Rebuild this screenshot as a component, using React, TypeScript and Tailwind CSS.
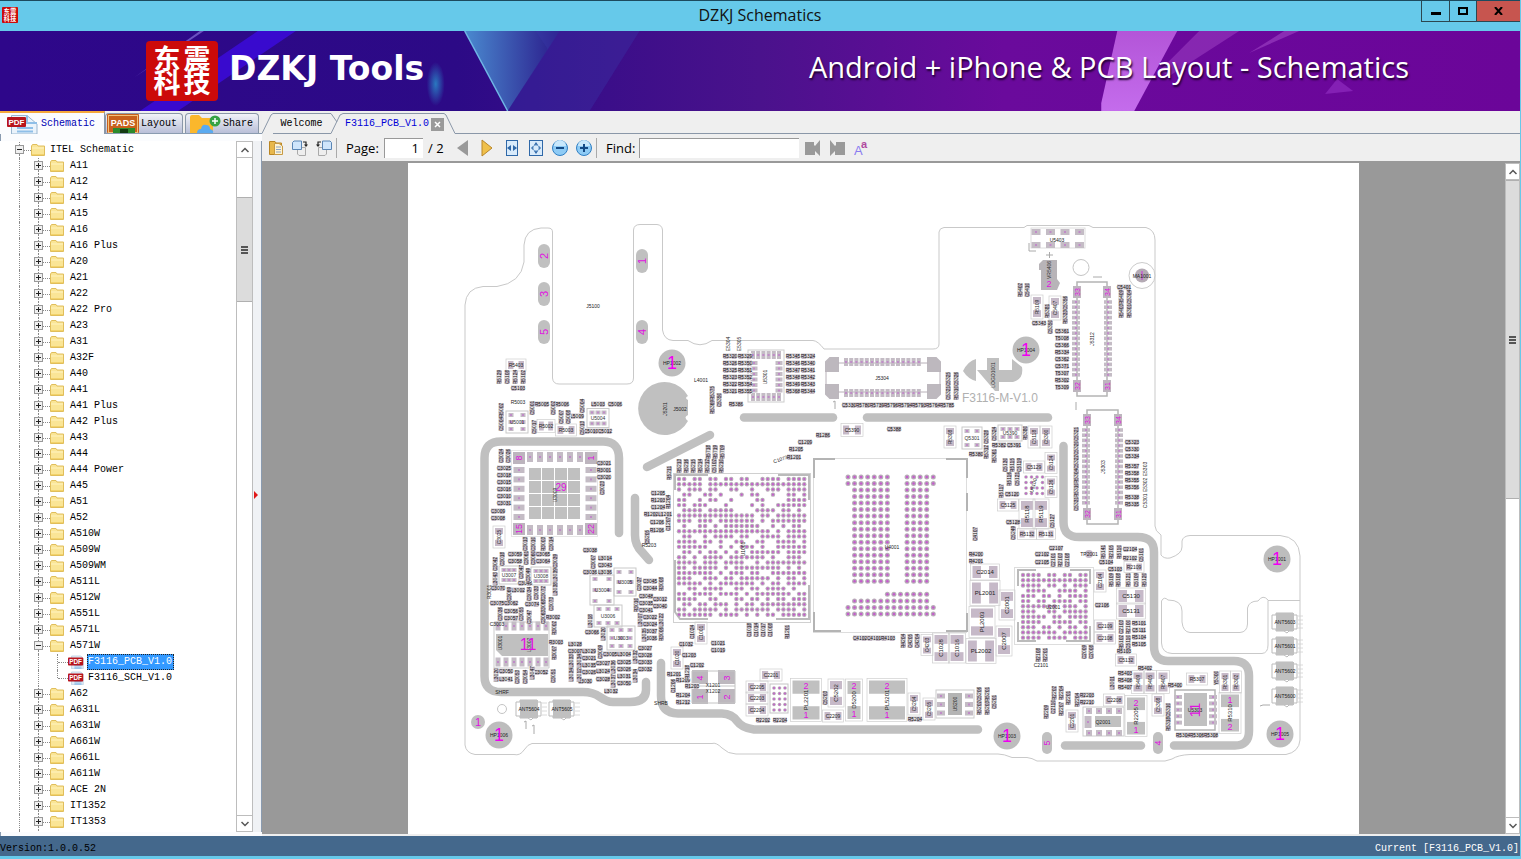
import { type ReactNode } from "react";

type Run = [x: number, y: number, dx: number, dy: number, names: string];
type Part = [x: number, y: number, w: number, h: number, name: string, axis: "h" | "v", pins?: string];

const MODELS_BEFORE = [
  "A11", "A12", "A14", "A15", "A16", "A16 Plus", "A20", "A21", "A22", "A22 Pro", "A23", "A31", "A32F", "A40",
  "A41", "A41 Plus", "A42 Plus", "A43", "A44", "A44 Power", "A45", "A51", "A52", "A510W", "A509W", "A509WM",
  "A511L", "A512W", "A551L", "A571L",
];
const MODELS_AFTER = ["A62", "A631L", "A631W", "A661W", "A661L", "A611W", "ACE 2N", "IT1352", "IT1353"];

/* ---------- board data, in page units ---------- */

const OUTLINE = [
  "M465 745V305Q466 288 483 286.500H497Q521 283 524 262V245Q525 229 541 228H548Q552.500 228 552.500 232V378Q553 384 559 384H627Q633.500 384 633.500 378V230Q634 224.500 640 224.500H657Q662 225 662.500 230V330Q664 340 673 340.500H688Q700 349 712 340.500H813Q818 341 824 349H933Q939 349 939 344V232Q939.500 228 944 227.500H1024L1027 225.500H1089L1093 227.500H1146Q1155 230 1155 240V526Q1155 531 1161 535V555Q1164 559 1170 558Q1182 554 1182 547V541Q1183 536 1190 535.500H1280Q1299 537 1300 556V740Q1299 752 1286 754.500H1190Q1178 755 1172 759L1165 761H1037Q1032 758 1027 757.500H1012Q1004 754 998 754H736Q728 754 722 748T712 743.500H532Q528 744 524 750T514 754.500H475Q466 753 465 745Z",
  "M1300 600.500H1268V645Q1268 653 1262 653.500H1172Q1162 653 1161.500 643V601Q1164 596 1168 600Q1182 600 1182 611V622Q1183 632 1190 632.500H1240Q1247 632 1247.500 624V608Q1249 601 1258 601Q1263 594 1268 600",
];

const TRACES = [
  "M619 533V458Q619 441.500 603 441.500H501Q484.500 441.500 484.500 458V676Q484.500 692 501 692H583Q593 692 600 697T613 702H630Q646 702 646 690V682",
  "M647 467L710 435",
  "M635 498V535Q635 545 642 552L649 560",
  "M744 417.500H833",
  "M867 417.500H1048",
  "M661 663V696Q661 713 678 713.500H722Q732 714 737 721T754 729.500H978",
  "M1063.500 446V522Q1063.500 537 1079 537H1138Q1154 537 1154 552V646Q1154 661 1168 661H1234Q1249 661 1249 676V731Q1249 745.500 1235 745.500H1174",
  "M1065 745.500H1141",
];

const ROW_LABELS: Run[] = [
  [518, 388, 0, 7, "C5103"],
  [542, 404, 20, 0, "R5005 R5006"],
  [598, 404, 17, 0, "L5003 C5006"],
  [577, 416, 0, 7, "L5009"],
  [591, 431, 14, 0, "C5010 C5012"],
  [730, 356, 0, 7, "R5320 R5326 R5325 R5323 R5322 R5321"],
  [745, 356, 0, 7, "R5329 R5350 R5351 R5352 R5354 R5355"],
  [793, 356, 0, 7, "R5345 R5346 R5347 R5348 R5349 R5368"],
  [808, 356, 0, 7, "R5324 R5340 R5341 R5342 R5343 R5344"],
  [736, 404, 0, 7, "R5386"],
  [849, 405, 14, 0, "C5330 R5780 R5739 R5796 R5794 R5793 R5764 R5785"],
  [894, 429, 0, 7, "C5388"],
  [823, 435, 0, 7, "R1286"],
  [805, 442, 0, 7, "C1209"],
  [796, 449, 0, 7, "R1205"],
  [794, 457, 0, 7, "R1201"],
  [1039, 323, 0, 7, "C5343"],
  [1062, 331, 0, 7, "C5361 T5008 C5366 R5334 C5362 C5371 T5307 R5302 T5309"],
  [1124, 287, 0, 7, "C5401"],
  [1132, 442, 0, 7, "C5323 C5330 C5334"],
  [1132, 466, 0, 7, "R5357 R5358 R5355 R5356"],
  [1132, 497, 0, 7, "R5338 R5335"],
  [976, 454, 0, 7, "R5380"],
  [999, 445, 15, 0, "R5382 C5391"],
  [1012, 494, 0, 7, "C5120"],
  [1013, 522, 0, 7, "C5128"],
  [1042, 554, 0, 8, "C2102 C2105"],
  [1056, 548, 0, 7, "C2107"],
  [1130, 549, 0, 9, "C2104 R2102"],
  [1106, 562, 9, 7, "C5104 C5103"],
  [1102, 605, 0, 7, "C2106"],
  [1139, 623, 0, 7, "R5101 C5111 R5104 R5105"],
  [1124, 651, 0, 7, "R5103"],
  [1145, 668, 0, 7, "R5402"],
  [1125, 673, 0, 7, "R5403 R5408 R5407"],
  [1175, 685, 0, 7, "R5400"],
  [1087, 695, 0, 7, "R2203 R2210"],
  [1183, 735, 14, 0, "R5304 R5306 R5308"],
  [860, 638, 14, 0, "C4102 C4101 R4103"],
  [976, 554, 0, 7, "R4200 R4201"],
  [763, 720, 17, 0, "R2202 R2204"],
  [915, 719, 0, 7, "R5204"],
  [504, 468, 0, 7, "C3025 C3018 C3015 C3016 C3010 C3031"],
  [498, 511, 0, 7, "C3009 C3008"],
  [604, 463, 0, 7, "C3021 R3001 C3020"],
  [515, 554, 0, 7, "C3059 C3058"],
  [543, 554, 0, 7, "C3065 C3064"],
  [498, 588, 0, 7, "C3070"],
  [525, 583, 0, 7, "C3046"],
  [518, 590, 0, 7, "L3002"],
  [497, 603, 14, 0, "C3075 C3062"],
  [532, 604, 0, 7, "C3074"],
  [511, 611, 0, 7, "C3056 C3057"],
  [553, 617, 0, 7, "R3002"],
  [556, 642, 0, 7, "R3003"],
  [506, 671, 0, 8, "C3050 L3041"],
  [541, 672, 0, 7, "C3052"],
  [590, 550, 0, 7, "C3038"],
  [605, 558, 0, 7, "L3014 C3043 L3036"],
  [590, 572, 0, 7, "C3036"],
  [650, 581, 0, 7, "C3045 C3044"],
  [646, 596, 0, 7, "C3048 C3035 C3041"],
  [660, 599, 0, 7, "C3012 C3040"],
  [650, 617, 0, 7, "C3022 C3024 C3037 C3036"],
  [592, 632, 0, 7, "C3066"],
  [575, 644, 0, 7, "L3028 C3007"],
  [589, 651, 0, 7, "L3029 C3021 L3035 C3026"],
  [585, 681, 0, 7, "C3030"],
  [610, 654, 14, 0, "C3005 L3004"],
  [603, 663, 0, 8, "C3027 L3024 C3028"],
  [624, 662, 0, 7, "C3025 C3026 L3031 C3050"],
  [611, 691, 0, 7, "L3032"],
  [645, 648, 0, 7, "C3027 C3028 C3033 C3032"],
  [658, 493, 0, 7, "C1205 R1203 C1204"],
  [651, 514, 14, 0, "R1202 L1201"],
  [657, 522, 0, 8, "C1206 R1206"],
  [686, 644, 3, 11, "C1032 C1203"],
  [718, 643, 0, 7, "C1021 C1019"],
  [697, 665, 0, 7, "C1202"],
  [674, 674, 9, 6, "R1201 R1209 R1203"],
  [683, 695, 0, 7, "R1204 R1212"],
];

const COLUMN_LABELS: Run[] = [
  [499, 377, 8, 0, "R5129 C5108 R5124 R5102"],
  [501, 410, 0, 14, "R5002 C5004"],
  [532, 408, 21, 0, "C5001 C5002"],
  [582, 406, 0, 22, "C5004 C5013"],
  [561, 417, 7, 0, "C5007 C5008"],
  [534, 427, 0, 7, "C5017"],
  [712, 393, 0, 14, "R5375 R5369"],
  [719, 400, 0, 13, "C5350"],
  [679, 466, 7, 0, "R5213 R5216 R5215 R5214 R5212 C5102 R5210"],
  [708, 452, 7, 0, "R5718 R5719 R5709"],
  [669, 473, 7, 0, "R5211"],
  [948, 379, 8, 0, "C5325 C5326"],
  [948, 393, 8, 0, "C5321 R5310"],
  [1020, 290, 7, 0, "R5402 C5410"],
  [1047, 311, 3, 16, "R5381 C5350"],
  [1065, 303, 0, 14, "C5356 R5333"],
  [1121, 297, 8, 0, "R5409 C5304"],
  [1121, 311, 8, 0, "R5403 R5301"],
  [1076, 434, 0, 14, "C5321 C5320 C5322 R5304 R5310 C5331"],
  [986, 437, 0, 15, "C5328 R5312"],
  [994, 434, 0, 22, "C5324 R5361"],
  [1025, 433, 0, 7, "R5380"],
  [1005, 465, 7, 0, "C5130 R5115 C5119"],
  [1009, 479, 8, 0, "R5116 C5121"],
  [1001, 491, 7, 0, "R5117"],
  [1013, 533, 7, 0, "C5249"],
  [1052, 521, 7, 0, "C5127"],
  [1053, 560, 7, 0, "C2101 R2103 C2108"],
  [1103, 552, 8, 0, "R5141 R2105 R5110"],
  [1141, 555, 0, 7, "C5101"],
  [1111, 580, 7, 0, "R5109 R5108"],
  [1128, 580, 8, 0, "R5121 C5109 R5120"],
  [1121, 627, 7, 0, "C2103 R2100"],
  [1121, 642, 7, 0, "R5102 C5110"],
  [1038, 655, 7, 0, "R2108 R2201"],
  [1084, 652, 7, 0, "C2009 C2008"],
  [1112, 683, 0, 7, "L3001"],
  [1216, 678, 0, 7, "Y5300"],
  [1046, 712, 7, -5, "R2209 C2110"],
  [1054, 693, 7, 0, "R2202 R2204"],
  [1061, 709, 7, -11, "R2207 R2201"],
  [1077, 700, 0, 7, "R2204"],
  [1168, 710, 0, 14, "C5310 R5318"],
  [749, 630, 7, 0, "C1018 C1014 C1017 C1008"],
  [787, 632, 7, 0, "R1201"],
  [903, 641, 7, 0, "R4204 C4205 C4204"],
  [975, 534, 7, 0, "C4107"],
  [825, 698, 7, 0, "C5203"],
  [979, 694, 8, 0, "C5206 R5201"],
  [979, 708, 8, 0, "R5202 R5203"],
  [994, 702, 8, 0, "C5201"],
  [501, 456, 7, 0, "C3024 C3026"],
  [602, 488, 7, 0, "C3023"],
  [525, 544, 8, 0, "C3013 C3010"],
  [543, 544, 8, 0, "R3003 C3014"],
  [526, 558, 7, 0, "C3061 C3060"],
  [502, 559, 0, 7, "C3018"],
  [495, 564, 0, 15, "C3042 L3043"],
  [521, 572, 7, 3, "C3047 C3049"],
  [555, 561, 0, 14, "C3039 L3039 L3038"],
  [509, 594, 20, 0, "C3069 C3034"],
  [536, 593, 7, 0, "C3033 C3072"],
  [543, 606, 8, -2, "R3068 C3073"],
  [500, 614, 21, 0, "C3036 C3055"],
  [529, 617, 14, 0, "C3047 C3063"],
  [554, 628, 0, 25, "R3002 R3007"],
  [496, 675, 0, 7, "L3020"],
  [517, 677, 8, 0, "C3053 C3054"],
  [532, 673, 21, 3, "L3047 C3051"],
  [593, 562, 0, 7, "C3007"],
  [639, 584, 22, 0, "C3037 R3008"],
  [636, 605, 4, 15, "R3010 L3007 L3035"],
  [661, 620, 0, 14, "L3022 R3006"],
  [590, 621, 13, 13, "L3018 L3020"],
  [571, 661, 8, 0, "L3033 L3034"],
  [571, 675, 8, 0, "L3034 L3012"],
  [600, 652, 0, 7, "C3009"],
  [613, 667, 0, 14, "L3036 L3037"],
  [635, 657, 0, 19, "L3032 L3034"],
  [668, 502, 0, 22, "R1204 C1207"],
  [647, 537, 7, 0, "C5205"],
  [692, 632, 7, 0, "C1024"],
  [673, 686, 14, -14, "C1206 R1218"],
];

/* silk text without a pad under it: x, y, text, rotation */
const SILK: [number, number, string, number][] = [
  [593, 308, "J5100", 0], [518, 404, "R5003", 0], [701, 382, "L4001", 0], [730, 344, "E5304", -90],
  [741, 344, "E5305", -90], [767, 377, "U5301", -90], [882, 380, "J5304", 0], [781, 461, "C1073", -20],
  [1094, 339, "J5312", -90], [1105, 467, "J5303", -90], [1147, 485, "C5301 E5302 E5303", -90],
  [667, 409, "J5201", -90], [680, 411, "J5002", 0], [745, 549, "U1001", -90], [892, 549, "U4001", 0],
  [1053, 609, "U2001", 0], [1057, 242, "U5403", 0], [649, 547, "R5203", 0], [491, 592, "R3001", -90],
  [497, 626, "C3003", 0], [1041, 667, "C2101", 0], [502, 694, "SHRF", 0], [661, 705, "SHRB", 0],
  [1089, 556, "TP2001", 0], [502, 643, "U3001", -90], [1035, 486, "U5100", -75],
];

const PARTS: Part[] = [
  [516, 365, 16, 8, "R5403", "h"], [546, 426, 14, 9, "R5002", "h"], [566, 430, 17, 8, "R5003", "h"],
  [852, 430, 18, 9, "C5390", "h"], [950, 437, 8, 18, "R5308", "v"], [1037, 307, 8, 20, "R5109", "v"],
  [1055, 308, 8, 20, "C5407", "v"], [1034, 437, 8, 18, "C5118", "v"], [1046, 437, 8, 18, "C5300", "v"],
  [1051, 463, 8, 17, "C5124", "v"], [1051, 487, 8, 17, "C5126", "v"], [1034, 467, 17, 8, "C5129", "h"],
  [1008, 505, 17, 8, "C5125", "h"], [1027, 514, 12, 26, "R5118", "v"], [1041, 514, 12, 26, "R5119", "v"],
  [1027, 534, 15, 7, "R5132", "h"], [1046, 534, 15, 7, "R5131", "h"], [1134, 567, 16, 7, "R2109", "h"],
  [1100, 581, 8, 18, "C2104", "v"], [1131, 596, 25, 12, "C5130", "h"], [1131, 611, 25, 12, "C5131", "h"],
  [1105, 626, 17, 8, "C2109", "h"], [1105, 638, 17, 8, "C2108", "h"], [1126, 660, 17, 8, "C5132", "h"],
  [1138, 682, 9, 19, "R5409", "v"], [1150, 682, 9, 19, "R5405", "v"], [1163, 682, 9, 19, "R5407", "v"],
  [1197, 679, 17, 8, "R5307", "h"], [1225, 682, 7, 18, "R5301", "v"], [1236, 682, 7, 18, "R5302", "v"],
  [1114, 700, 17, 8, "C2208", "h"], [1072, 721, 8, 18, "C2201", "v"], [1158, 705, 8, 18, "C5308", "v"],
  [1136, 716, 18, 37, "R2205", "v", "21"], [1230, 713, 18, 37, "R5310", "v", "12"],
  [927, 645, 8, 17, "C4203", "v"], [941, 648, 13, 26, "C1028", "v"], [957, 648, 13, 26, "C1016", "v"],
  [985, 572, 25, 12, "C2014", "h"], [985, 593, 26, 21, "PL2001", "h"], [1007, 605, 12, 26, "C2001", "v"],
  [982, 622, 22, 27, "PL2003", "v"], [981, 651, 26, 21, "PL2002", "h"], [1004, 641, 12, 26, "C2007", "v"],
  [771, 675, 18, 8, "C2201", "h"], [757, 687, 18, 8, "C2205", "h"], [757, 698, 18, 8, "C2203", "h"],
  [757, 710, 18, 8, "C2204", "h"], [806, 700, 27, 39, "PL2201", "v", "21"], [836, 693, 12, 24, "C5202", "v"],
  [833, 716, 17, 8, "C2209", "h"], [854, 700, 13, 38, "D5200", "v", "21"], [887, 700, 36, 39, "PL5201", "v", "21"],
  [914, 704, 8, 18, "C5204", "v"], [929, 709, 8, 18, "C5205", "v"], [499, 537, 8, 18, "C3025", "v"],
  [701, 633, 8, 18, "C1001", "v"], [677, 658, 8, 18, "C1020", "v"],
];

/* x, y, width, height, pad columns, pad rows, name */
const ARRAYS: [number, number, number, number, number, number, string][] = [
  [517, 422, 18, 18, 2, 3, "U5001"], [598, 418, 18, 15, 3, 2, "U5004"], [509, 575, 16, 14, 3, 2, "U3007"],
  [541, 576, 16, 14, 3, 2, "U3008"], [602, 590, 20, 26, 2, 3, "U3004"], [625, 582, 18, 24, 2, 3, "U3005"],
  [608, 616, 24, 18, 3, 2, "U3006"], [621, 638, 24, 20, 3, 3, "U3003"], [972, 438, 16, 18, 2, 2, "Q5301"],
  [1010, 433, 20, 12, 3, 2, "U5390"],
];

const CPU_BALLS = [
  "11011011011011001111011110", "1111101111111111111111111", "1011101100110010011101111", "0110011010001011001001101",
  "1100101100100001100001111", "1101110001000010100111111", "0111101111100001111011010", "1111111111111110110111111",
  "1110111011111110101111111", "0100110101111111001010110", "1111111111111111110101111", "0110010111101100111101111",
  "1111011010011001100111101", "1111110010101110100111111", "0110101101010011111101111", "1101011110111111101001110",
  "1111011101111001011111111", "1101111101011111111101010", "1111111010111011001111111", "1110011101101111110101101",
  "1111101011111110101101111", "0011011110011011011110100", "1101111011110101111111011", "1111001100011011010110111",
  "0110110111010110111111111", "1101111101011111110111101", "1111111011110101011011111",
].map((row) => row.slice(0, 25));

const RF_BALLS = [
  "1111011011011", "1111111111111", "1111011010111", "0111100111101", "1110110101111", "1101101111011",
  "1111111011101", "1110011011111", "1111101101111", "1111001111011", "1110110101101", "1111111011111", "1111011110111",
];

const MEMORY_BALLS = [
  "11111110011111", "11111110011111",
  ...Array<string>(15).fill("01111110011110"),
  "00000000000000", "00000011111110", "01111111111110", "11111111111111", "11111111111111",
];

const MOUNTS: [number, number, string][] = [
  [672, 363, "HP1002"], [1026, 350, "HP1004"], [1277, 559, "HP1001"],
  [1280, 734, "HP1005"], [1007, 736, "HP1003"], [499, 735, "HP1006"],
];

const range = (n: number) => Array.from({ length: n }, (_, i) => i);

/* ---------- board drawing ---------- */

function Tags({ runs, vertical }: { runs: Run[]; vertical?: boolean }) {
  return (
    <g fontSize="5" textAnchor="middle">
      {runs.flatMap(([x, y, dx, dy, names], r) =>
        names.split(" ").map((name, i) => (
          <g key={`${r}-${i}`} transform={`translate(${x + dx * i} ${y + dy * i})${vertical ? " rotate(-90)" : ""}`}>
            <rect x="-7" y="-3" width="14" height="6" fill="#e6e3e6" />
            <rect x="-6" y="-2" width="4" height="5" fill="#c3b9c5" />
            <rect x="2" y="-2" width="4" height="5" fill="#c3b9c5" />
            <text y="2" fill="#111">{name}</text>
          </g>
        )),
      )}
    </g>
  );
}

function TwoPad({ part: [x, y, w, h, name, axis, pins] }: { part: Part }) {
  const across = axis === "h";
  const pw = across ? w * 0.34 : w;
  const ph = across ? h : h * 0.34;
  const [a, b] = pins ?? "";
  return (
    <g transform={`translate(${x} ${y})`} textAnchor="middle">
      <rect x={-w / 2 - 2} y={-h / 2 - 2} width={w + 4} height={h + 4} fill="none" stroke="#cfcfcf" strokeWidth=".7" />
      <rect x={-w / 2} y={-h / 2} width={pw} height={ph} fill={pins ? "#c0c0c0" : "#c6b9c8"} />
      <rect x={w / 2 - pw} y={h / 2 - ph} width={pw} height={ph} fill={pins ? "#c0c0c0" : "#c6b9c8"} />
      <text fontSize={w + h > 34 ? 6 : 5} y="2" fill="#222" transform={across ? undefined : "rotate(-90)"}>{name}</text>
      {pins && (
        <g fontSize="9" fill="#e010e0">
          <text y={-h / 2 + 8}>{a}</text>
          <text y={h / 2 - 2}>{b}</text>
        </g>
      )}
    </g>
  );
}

function Balls({ x, y, pitch, pitchY = pitch, rows, r = 2.2 }: { x: number; y: number; pitch: number; pitchY?: number; rows: string[]; r?: number }) {
  return (
    <g>
      {rows.flatMap((row, j) =>
        [...row].map((on, i) =>
          on === "1" ? (
            <g key={`${i}-${j}`}>
              <circle cx={x + i * pitch} cy={y + j * pitchY} r={r} fill="#b8acb8" />
              <circle cx={x + i * pitch} cy={y + j * pitchY} r={r * 0.5} fill="#c45ccc" />
            </g>
          ) : null,
        ),
      )}
    </g>
  );
}

function Pads({ x, y, dx = 0, dy = 0, n, w, h }: { x: number; y: number; dx?: number; dy?: number; n: number; w: number; h: number }) {
  return (
    <g>
      {range(n).map((i) => (
        <g key={i}>
          <rect x={x + dx * i - w / 2} y={y + dy * i - h / 2} width={w} height={h} fill="#c4bcc5" />
          <rect x={x + dx * i - 1} y={y + dy * i - 1} width="2" height="2" fill="#c08bc8" />
        </g>
      ))}
    </g>
  );
}

function Pin({ x, y, label, size = 11, turn = -90 }: { x: number; y: number; label: string; size?: number; turn?: number }) {
  return (
    <text transform={`translate(${x} ${y}) rotate(${turn})`} y={size * 0.36} fontSize={size} fill="#e010e0" textAnchor="middle">
      {label}
    </text>
  );
}

function SideConnector({ x, y, width }: { x: number; y: number; width: number }) {
  const right = x + width;
  return (
    <g>
      <rect x={x} y={y} width={width} height="114" fill="none" stroke="#b4b4b4" strokeWidth="1.5" />
      <Pads x={x - 1} y={y + 20} dy={5.2} n={15} w={8} h={3.6} />
      <Pads x={right + 1} y={y + 20} dy={5.2} n={15} w={8} h={3.6} />
      {[[x, 10, "33"], [right, 10, "34"], [x, 104, "32"], [right, 104, "31"]].map(([px, py, label]) => (
        <g key={label}>
          <rect x={Number(px) - 4} y={y + Number(py) - 6} width="8" height="12" fill="#bdb5be" />
          <Pin x={Number(px)} y={y + Number(py)} label={String(label)} size={7} />
        </g>
      ))}
    </g>
  );
}

function Antenna({ x, y, name }: { x: number; y: number; name: string }) {
  return (
    <g transform={`translate(${x} ${y})`}>
      <path d="M-13-7H-9V-9H8V-7H12V7H8V9H4L2 11L-1 9H-9V7H-13Z" fill="none" stroke="#bbb" />
      <path d="M-9-9H9V9H-9Z" fill="#c0c0c0" />
      <path d="M13-6h5M13-2h5M13 2h5M13 6h5" stroke="#d0d0d0" strokeWidth=".8" />
      <text y="2" fontSize="5" fill="#222" textAnchor="middle">{name}</text>
    </g>
  );
}

function Board() {
  return (
    <svg
      viewBox="408 163 951 671"
      className="h-[671px] w-[951px] shrink-0 bg-white"
      fontFamily="'Liberation Sans', sans-serif"
      role="img"
      aria-label="F3116 PCB V1.0 component placement"
    >
      <g fill="none" stroke="#c9c9c9">{OUTLINE.map((d) => <path key={d} d={d} />)}</g>
      <g fill="none" stroke="#c0c0c0" strokeWidth="8.500" strokeLinecap="round">
        {TRACES.map((d) => <path key={d} d={d} />)}
      </g>

      {/* edge contacts */}
      {([[544, 256, "2"], [544, 294, "3"], [544, 332, "5"], [642, 261, "1"], [642, 332, "4"]] as const).map(([x, y, n]) => (
        <g key={n}>
          <rect x={x - 6} y={y - 12} width="12" height="24" rx="6" fill="#c0c0c0" />
          <Pin x={x} y={y} label={n} />
        </g>
      ))}
      {([[1047, 743, "5"], [1158, 743, "4"]] as const).map(([x, y, n]) => (
        <g key={n}>
          <rect x={x - 5} y={y - 11} width="10" height="22" rx="5" fill="#c0c0c0" />
          <Pin x={x} y={y} label={n} size={9} />
        </g>
      ))}

      {MOUNTS.map(([x, y, name]) => (
        <g key={name} textAnchor="middle">
          <circle cx={x} cy={y} r="13.500" fill="#bdbdbd" />
          <text x={x} y={y + 2} fontSize="5" fill="#222">{name}</text>
          <text x={x} y={y + 6} fontSize="18" fill="#f000f0">1</text>
        </g>
      ))}
      <circle cx="478" cy="722" r="7" fill="#c0c0c0" />
      <Pin x={478} y={722} label="1" turn={0} />
      <circle cx="1142" cy="275.500" r="13" fill="none" stroke="#ccc" />
      <circle cx="1142" cy="275.500" r="7" fill="#b4aab4" />
      <path d="M1142 271V280" stroke="#c45ccc" strokeWidth="1.500" />
      <text x="1142" y="278" fontSize="5" fill="#222" textAnchor="middle">MA1001</text>
      <circle cx="1089" cy="554" r="4" fill="#c6b9c8" />
      <g fill="none" stroke="#c4c4c4">
        <circle cx="1081" cy="267.500" r="8" />
        <circle cx="502" cy="709" r="4.500" />
      </g>
      <path d="M688 396A26.500 26.500 0 1 0 688 421Q683 417 688 415V400Q684 398 688 396Z" fill="#c0c0c0" />

      {/* logo arrow and board name */}
      <path d="M963 371Q968 361 976 359V381Q968 379 963 371ZM977 370H987V358H999V370H1012V359L1022 367Q1024 379 1013 382H999V391H995Z" fill="#c0c0c0" />
      <text transform="translate(993 375) rotate(-90)" y="2" fontSize="5" fill="#333" textAnchor="middle">LOGO1001</text>
      <text x="962" y="402" fontSize="12" fill="#b0b0b0">F3116-M-V1.0</text>

      {/* board-to-board connectors */}
      <path d="M830 358H838V371H826V362ZM928 358H936L940 362V371H928ZM826 385H838V398H830L826 394ZM928 385H940V394L936 398H928Z" fill="#bdb8be" stroke="#bdb8be" strokeWidth="2" />
      <path d="M826 371V385M940 371V385M838 363H928M838 392H928" stroke="#b8b0b8" />
      <Pads x={846} y={362} dx={5.2} n={15} w={4} h={8} />
      <Pads x={846} y={393} dx={5.2} n={15} w={4} h={8} />
      <SideConnector x={1077} y={282} width={30} />
      <SideConnector x={1087} y={410} width={31} />

      <rect x="748" y="350" width="36" height="52" fill="none" stroke="#ccc" />
      <Pads x={753} y={355} dx={5.2} n={6} w={4} h={8} />
      <Pads x={753} y={397} dx={5.2} n={6} w={4} h={8} />
      <Pads x={754} y={363} dy={5.5} n={6} w={7} h={4} />
      <Pads x={779} y={363} dy={5.5} n={6} w={7} h={4} />

      <rect x="1031" y="228" width="54" height="20" fill="none" stroke="#ddd" />
      <Pads x={1036} y={232} dx={14.5} n={4} w={9} h={6} />
      <Pads x={1036} y={245} dx={14.5} n={4} w={9} h={6} />
      <path d="M1029 243V251H1036M1049.500 252V258M1046 255H1053M1093 277H1102M1076 402V410" fill="none" stroke="#aaa" />
      <path d="M1043 260H1057V279L1060 283L1057 290H1041V270H1039V264Z" fill="#b8b4b8" />
      <Pin x={1049} y={284} label="2" size={9} turn={0} />
      <text transform="translate(1049 270) rotate(-90)" y="2" fontSize="5" fill="#333" textAnchor="middle">VR5406</text>

      {/* power amplifier */}
      <rect x="511.500" y="450.500" width="86" height="86" fill="none" stroke="#ccc" strokeDasharray="1 1" />
      <Pads x={530} y={457} dx={10} n={6} w={6} h={10} />
      <Pads x={530} y={530} dx={10} n={6} w={6} h={10} />
      <Pads x={519} y={470} dy={9.4} n={6} w={11} h={6} />
      <Pads x={591} y={470} dy={9.4} n={6} w={11} h={6} />
      {([[519, 458, "8"], [591, 458, "1"], [519, 529, "15"], [591, 529, "22"]] as const).map(([x, y, n]) => (
        <g key={n}>
          <rect x={x - 6} y={y - 6} width="12" height="12" fill="#bdb5be" />
          <Pin x={x} y={y} label={n} size={9} />
        </g>
      ))}
      {range(16).map((i) => (
        <rect key={i} x={529 + (i % 4) * 13} y={468 + Math.floor(i / 4) * 13} width="12" height="12" fill="#c0c0c0" />
      ))}
      <text transform="translate(555 495) rotate(-90)" y="2" fontSize="5" fill="#333" textAnchor="middle">U3009</text>
      <Pin x={561} y={487} label="29" size={10} turn={0} />

      <path d="M496 634H548V656H502L496 650Z" fill="#c0c0c0" />
      <path d="M494 622H549V668H494Z" fill="none" stroke="#ccc" />
      <Pads x={498} y={626} dx={8} n={7} w={5} h={9} />
      <Pads x={498} y={662} dx={8} n={7} w={5} h={9} />
      <text transform="translate(529 645) rotate(-90)" y="2" fontSize="5" fill="#333" textAnchor="middle">U3002</text>
      <Pin x={528} y={644} label="11" size={16} turn={0} />

      {/* crystal */}
      <path d="M692 670H708V684H692ZM718 670H735V684H718ZM692 689H708V704H692ZM718 689H735V704H718Z" fill="#bdb8be" />
      <path d="M692 671H735V703H692ZM692 686H735" fill="none" stroke="#c4c4c4" />
      <Pin x={700} y={678} label="4" size={9} />
      <Pin x={727} y={678} label="3" size={9} />
      <Pin x={700} y={697} label="1" size={9} />
      <Pin x={727} y={697} label="2" size={9} />
      <text x="713" y="687" fontSize="5" fill="#333" textAnchor="middle">X1201</text>
      <text x="713" y="693" fontSize="5" fill="#333" textAnchor="middle">X1202</text>

      {/* processor, memory, power manager */}
      <rect x="673.500" y="473.500" width="137" height="149" fill="none" stroke="#d0d0d0" />
      <path d="M675 490V475H708M778 475H809V500M809 585V619H776M675 560V612L680 619H708" fill="none" stroke="#bbb" strokeWidth="2" />
      <Balls x={679} y={479} pitch={5.22} rows={CPU_BALLS} />
      <rect x="813.500" y="458.500" width="153" height="174" fill="none" stroke="#ddd" />
      <path d="M814 478V459H835M946 459H967V478M967 493V511M814 612V631H841M946 631H967V613" fill="none" stroke="#b4b4b4" strokeWidth="2" />
      <Balls x={848} y={477} pitch={6.56} pitchY={6.52} rows={MEMORY_BALLS} r={2.5} />
      <rect x="1014.500" y="567.500" width="79" height="77" fill="none" stroke="#ddd" />
      <path d="M1018 586V570H1036M1070 570H1090V584M1090 626V641H1066M1036 641H1018V622" fill="none" stroke="#bbb" strokeWidth="2" />
      <Balls x={1023} y={575} pitch={5.22} rows={RF_BALLS} />
      <Balls x={1026} y={477} pitch={5.5} rows={["1111", "1101", "1111", "1111"]} r={1.8} />
      <rect x="770" y="684" width="18" height="29" fill="none" stroke="#c4c4c4" />
      <Balls x={774} y={688} pitch={5.5} rows={["111", "111", "111", "111", "111"]} r={1.8} />

      {/* small controllers */}
      <rect x="1083" y="707" width="41" height="29" fill="none" stroke="#ccc" />
      <path d="M1095 716H1121V727H1095Z" fill="#c0c0c0" />
      <Pads x={1089} y={711} dx={10} n={4} w={6} h={6} />
      <Pads x={1089} y={733} dx={10} n={4} w={6} h={6} />
      <Pads x={1088} y={722} n={1} w={7} h={12} />
      <text x="1103" y="724" fontSize="5" fill="#222" textAnchor="middle">Q2001</text>
      <rect x="1175" y="690" width="40" height="40" fill="none" stroke="#b4b4b4" strokeWidth="1.500" />
      <rect x="1184" y="693" width="23" height="33" fill="#c0c0c0" />
      <Pads x={1178} y={697} dy={6.4} n={5} w={8} h={4} />
      <Pads x={1213} y={697} dy={6.4} n={5} w={8} h={4} />
      <text x="1195" y="712" fontSize="5" fill="#222" textAnchor="middle">U5303</text>
      <Pin x={1195} y={710} label="11" size={14} />
      <rect x="936" y="690" width="38" height="28" fill="none" stroke="#ccc" />
      <rect x="948" y="693" width="14" height="22" fill="#b4b4b4" />
      <Pads x={941} y={696} dy={8.5} n={3} w={8} h={5} />
      <Pads x={969} y={696} dy={8.5} n={3} w={8} h={5} />
      <text transform="translate(955 704) rotate(-90)" y="2" fontSize="5" fill="#222" textAnchor="middle">U5200</text>

      {ARRAYS.map(([x, y, w, h, cols, rows, name]) => (
        <g key={name}>
          <rect x={x - w / 2 - 2} y={y - h / 2 - 2} width={w + 4} height={h + 4} fill="none" stroke="#c9c9c9" />
          {range(rows).map((j) => (
            <Pads key={j} x={x - w / 2 + 3} y={y - h / 2 + 2 + (j * (h - 4)) / (rows - 1)} dx={(w - 6) / (cols - 1)} n={cols} w={5} h={4} />
          ))}
          <text x={x} y={y + 2} fontSize="5" fill="#333" textAnchor="middle">{name}</text>
        </g>
      ))}
      {PARTS.map((part, i) => <TwoPad key={i} part={part} />)}
      <Tags runs={ROW_LABELS} />
      <Tags runs={COLUMN_LABELS} vertical />
      <g fontSize="5" fill="#222" textAnchor="middle">
        {SILK.map(([x, y, name, turn]) => (
          <text key={`${name}${x}`} transform={`translate(${x} ${y}) rotate(${turn})`}>{name}</text>
        ))}
      </g>

      <Antenna x={529} y={709} name="ANT5604" />
      <Antenna x={562} y={709} name="ANT5605" />
      <Antenna x={1285} y={622} name="ANT5603" />
      <Antenna x={1285} y={646} name="ANT5601" />
      <Antenna x={1285} y={671} name="ANT5602" />
      <Antenna x={1285} y={696} name="ANT5600" />
      <path d="M524 722l2-1v8M532 726l2-1v9M1260 706l3-1h7M833 402l2-1v8" fill="none" stroke="#aaa" />
    </svg>
  );
}

/* ---------- icons ---------- */

function Folder() {
  return (
    <svg width="14" height="12" viewBox="0 0 14 12" aria-hidden="true">
      <path d="M.5 2L1.500.5H6L7 2H13.500V11.500H.5Z" fill="#fae596" stroke="#e0be5c" />
      <path d="M1 4H13" stroke="#fff3c0" />
      <path d="M1 10.500H13" stroke="#f3d36c" />
    </svg>
  );
}

function PdfIcon({ large }: { large?: boolean }) {
  const size = large ? "h-[20px] w-[32px]" : "h-[14px] w-[16px]";
  return (
    <svg viewBox={large ? "0 0 32 20" : "0 0 20 17"} className={size} aria-hidden="true">
      {large ? (
        <path d="M4.500 20V1.500H20L30 10V20Z" fill="#eaf3fb" stroke="#9bb6cf" />
      ) : (
        <path d="M4.500 17V1H16L19 4V17Z" fill="#e3eef8" stroke="#b7cde0" />
      )}
      <path d={large ? "M20 1.500V9H30M10 14H26M10 17.500H26" : "M8 13H17M8 16H17"} fill="none" stroke="#8fbfe8" strokeWidth="2" />
      <rect x="0" y="3" width="19" height="10" rx="1" fill="#b8141c" />
      <text x="9.500" y="11" fontSize="8" fontWeight="bold" fill="#fff" textAnchor="middle" fontFamily="Liberation Sans">PDF</text>
    </svg>
  );
}

function PadsIcon() {
  return (
    <svg viewBox="0 0 32 19" className="h-[19px] w-[32px]" aria-hidden="true">
      <rect width="32" height="19" rx="1" fill="#c8601c" />
      <rect x="1.500" y="1.500" width="29" height="17" fill="none" stroke="#f2c27a" />
      <path d="M6 19V14H28V19Z" fill="#2c8a2c" />
      <path d="M13 15H21V19H13Z" fill="#123a12" />
      <text x="16" y="12" fontSize="9" fontWeight="bold" fill="#fff" textAnchor="middle" fontFamily="Liberation Sans">PADS</text>
    </svg>
  );
}

function ShareIcon() {
  return (
    <svg viewBox="0 0 32 19" className="h-[19px] w-[32px]" aria-hidden="true">
      <path d="M1 19V3Q1 1 3 1H10L13 4H24V19Z" fill="#fbb72c" />
      <path d="M8 19Q8 15 12 15Q13 10 17 11Q21 11 21 15Q25 16 24 19Z" fill="#5aaaf0" />
      <circle cx="26" cy="7" r="5.500" fill="#36a344" />
      <path d="M26 4V10M23 7H29" stroke="#fff" strokeWidth="1.500" />
    </svg>
  );
}

function Seal({ className }: { className: string }) {
  return (
    <svg viewBox="0 0 72 60" preserveAspectRatio="none" className={`overflow-visible ${className}`} aria-hidden="true">
      <rect width="72" height="60" rx="4" fill="#cc0a0a" />
      <g fill="#fff" fontFamily="'Noto Sans CJK SC', sans-serif" fontWeight="bold" fontSize="27" textAnchor="middle">
        <text x="21" y="28">东</text>
        <text x="51" y="28">震</text>
        <text x="21" y="52">科</text>
        <text x="51" y="52">技</text>
      </g>
    </svg>
  );
}

const copyIcon = (
  <svg viewBox="0 0 18 18" width="18" height="18">
    <path d="M2.500 2.500H8L9 4H14.500V15.500H2.500Z" fill="#e8b84c" stroke="#b98522" />
    <path d="M7.500 4.500H12L15.500 7V15.500H7.500Z" fill="#fff3d2" stroke="#c79a44" />
    <path d="M9 8H14M9 10.500H14M9 13H14" stroke="#8aa3c4" />
  </svg>
);
const rotateIcon = (
  <svg viewBox="0 0 18 18" width="18" height="18">
    <path d="M6.500 8.500H14.500V16.500H8L6.500 15Z" fill="#eee" stroke="#aaa" />
    <path d="M1.500 3.500L3 2H10.500V10.500H1.500Z" fill="#cfe5fb" stroke="#5b86b5" />
    <path d="M12 3H15V6" fill="none" stroke="#222" strokeWidth="1.200" />
    <path d="M13 5.500H17L15 8Z" fill="#222" />
  </svg>
);
const fitWidthIcon = (
  <svg viewBox="0 0 16 18" width="16" height="18">
    <rect x="2.500" y="1.500" width="11" height="15" fill="#d9ebfb" stroke="#2f68a8" />
    <path d="M3 9L7 6V12ZM13 9L9 6V12Z" fill="#2f68a8" />
  </svg>
);
const fitPageIcon = (
  <svg viewBox="0 0 16 18" width="16" height="18">
    <rect x="1.500" y="1.500" width="13" height="15" fill="#d9ebfb" stroke="#2f68a8" />
    <path d="M8 3L10 6H6ZM8 15L6 12H10ZM3 9L5 7V11ZM13 9L11 7V11Z" fill="#2f68a8" />
    <circle cx="8" cy="9" r="3" fill="none" stroke="#7aa5d2" />
  </svg>
);

function ZoomIcon({ plus }: { plus?: boolean }) {
  return (
    <svg viewBox="0 0 18 18" width="18" height="18">
      <circle cx="9" cy="9" r="7.500" fill="#8ecbf5" stroke="#2f7fc4" />
      <path d="M3 7A6 6 0 0 1 15 7Z" fill="#c9e8fc" />
      <path d={plus ? "M5 9H13M9 5V13" : "M5 9H13"} stroke="#144a86" strokeWidth="2" />
    </svg>
  );
}

/* ---------- chrome ---------- */

function Tool({ label, width = "w-6", children }: { label: string; width?: string; children: ReactNode }) {
  return (
    <button type="button" aria-label={label} className={`flex h-6 shrink-0 items-center justify-center ${width}`}>
      {children}
    </button>
  );
}

function ScrollBar({ className, thumb, lead }: { className: string; thumb: string; lead: string }) {
  return (
    <div className={`flex shrink-0 flex-col border border-[#bdbdbd] bg-white ${className}`}>
      <button type="button" aria-label="Scroll up" className="flex h-4 items-center justify-center border-b border-[#bdbdbd] bg-white">
        <svg width="8" height="6" viewBox="0 0 8 6"><path d="M.5 5L4 1.500L7.500 5" fill="none" stroke="#555" strokeWidth="1.500" /></svg>
      </button>
      <div className={lead} />
      <div className={`flex flex-col items-center justify-center gap-px border-y border-[#b0b0b0] bg-[#dcdcdc] ${thumb}`}>
        <span className="h-[2px] w-[7px] bg-[#555]" />
        <span className="h-[2px] w-[7px] bg-[#555]" />
        <span className="h-[2px] w-[7px] bg-[#555]" />
      </div>
      <div className="flex-1" />
      <button type="button" aria-label="Scroll down" className="flex h-4 items-center justify-center border-t border-[#bdbdbd] bg-white">
        <svg width="8" height="6" viewBox="0 0 8 6"><path d="M.5 1L4 4.500L7.500 1" fill="none" stroke="#555" strokeWidth="1.500" /></svg>
      </button>
    </div>
  );
}

function TitleBar() {
  return (
    <header className="grid h-[31px] shrink-0 grid-cols-[1fr_auto_1fr] border-t border-[#1c4a5e] bg-[#66c9ea]">
      <Seal className="ml-[2px] mt-[6px] h-4 w-4" />
      <h1 className="text-[16px] leading-[28px] text-[#111]">DZKJ Schematics</h1>
      <div className="flex h-[21px] justify-self-end border-b border-l border-[#2c4650]">
        <button type="button" aria-label="Minimize" className="flex w-[28px] items-center justify-center border-r border-[#2c4650]">
          <span className="mt-1 h-[3px] w-[10px] bg-black" />
        </button>
        <button type="button" aria-label="Maximize" className="flex w-[26px] items-center justify-center">
          <span className="h-2 w-[10px] border-2 border-black" />
        </button>
        <button type="button" aria-label="Close" className="flex w-[44px] items-center justify-center border-l border-[#2c4650] bg-[#c7554f]">
          <svg width="9" height="8" viewBox="0 0 9 8"><path d="M1 0L8 8M8 0L1 8" stroke="#000" strokeWidth="2" /></svg>
        </button>
      </div>
    </header>
  );
}

function Banner() {
  return (
    <section className="relative flex h-20 shrink-0 items-center overflow-hidden bg-[#31078c]">
      <svg viewBox="0 0 1521 80" preserveAspectRatio="none" className="absolute inset-0 h-full w-full" aria-hidden="true">
        <defs>
          <linearGradient id="sky">
            <stop offset="0" stopColor="#2e078a" />
            <stop offset=".3" stopColor="#2c0a86" />
            <stop offset=".5" stopColor="#4a128c" />
            <stop offset=".66" stopColor="#6a0a9c" />
            <stop offset="1" stopColor="#6b0599" />
          </linearGradient>
          <linearGradient id="shard">
            <stop offset="0" stopColor="#4a8ad0" />
            <stop offset="1" stopColor="#2a1a8a" />
          </linearGradient>
          <linearGradient id="flare" x1="0" y1="0" x2="0" y2="1">
            <stop offset="0" stopColor="#b355d8" />
            <stop offset="1" stopColor="#c46cec" />
          </linearGradient>
          <radialGradient id="glow">
            <stop offset="0" stopColor="#2a78c0" />
            <stop offset="1" stopColor="#2a78c0" stopOpacity="0" />
          </radialGradient>
        </defs>
        <rect width="1521" height="80" fill="url(#sky)" />
        <path d="M258 0H296L178 80H140Z" fill="#3c0be0" opacity=".8" />
        <path d="M200 0L135 46L204 0Z" fill="#6a50c0" />
        <path d="M465 0H560L508 80Z" fill="url(#shard)" />
        <path d="M536 0H640L590 80H508L548 18Z" fill="#3a3aa8" opacity=".35" />
        <path d="M465 0L508 80" stroke="#6fb6e6" strokeWidth="1.500" />
        <ellipse cx="436" cy="53" rx="9" ry="22" fill="url(#glow)" />
        <path d="M1118 0H1178L1135 80H1102V72Z" fill="url(#flare)" />
        <path d="M1200 0H1240L1170 45L1160 40Z" fill="#9a3cc0" opacity=".6" />
        <path d="M1285 0H1300L1250 22Z" fill="#8a2cb4" />
        <path d="M1338 48L1354 60L1326 63Z" fill="#8420b4" />
      </svg>
      <Seal className="relative ml-[146px] h-[60px] w-[72px]" />
      <p className="relative mb-1 ml-[11px] flex-1 font-['DejaVu_Sans',sans-serif] text-[33px] font-bold leading-[40px] text-white">DZKJ Tools</p>
      <p className="relative mb-2 mr-[111px] whitespace-nowrap text-[29px] leading-[40px] text-white [text-shadow:1px_2px_2px_#200030]">
        Android + iPhone &amp; PCB Layout - Schematics
      </p>
    </section>
  );
}

const GUIDE = "border-dotted border-[#8a8a8a]";

function Toggle({ open }: { open?: boolean }) {
  return (
    <span className="flex w-[9px] shrink-0 flex-col items-center">
      <span className={`h-[3px] border-l ${GUIDE}`} />
      <span className="flex h-[9px] w-[9px] items-center justify-center border border-[#999] bg-[#f0f0f0]">
        <svg width="5" height="5" viewBox="0 0 5 5"><path d={open ? "M0 2.500H5" : "M0 2.500H5M2.500 0V5"} stroke="#222" /></svg>
      </span>
      <span className={`h-1 border-l ${GUIDE}`} />
    </span>
  );
}

function ModelRow({ name, open }: { name: string; open?: boolean }) {
  return (
    <button type="button" aria-expanded={!!open} className="flex h-4 items-center">
      <span className={`ml-[19px] h-4 w-[15px] border-l ${GUIDE}`} />
      <Toggle open={open} />
      <span className={`w-[7px] border-t ${GUIDE}`} />
      <Folder />
      <span className="ml-[6px] whitespace-pre">{name}</span>
    </button>
  );
}

function FileRow({ name, selected, last }: { name: string; selected?: boolean; last?: boolean }) {
  return (
    <button type="button" className="flex h-4 items-center">
      <span className={`ml-[19px] h-4 w-[19px] border-l ${GUIDE}`} />
      <span className={`h-4 w-[19px] border-l ${GUIDE}`} />
      <span className={`self-start border-l ${GUIDE} ${last ? "h-2" : "h-4"}`} />
      <span className={`w-[10px] border-t ${GUIDE}`} />
      <PdfIcon />
      <span
        className={
          selected
            ? "ml-[3px] h-4 border border-dotted border-[#222] bg-[#3399ff] pr-px leading-[14px] text-white"
            : "ml-[4px]"
        }
      >
        {name}
      </span>
    </button>
  );
}

function Sidebar() {
  const idle = "flex h-[20px] items-center rounded-t-sm border border-b-0 border-[#8a97a8] bg-gradient-to-b from-[#f2f3f8] to-[#b9bfd8]";
  return (
    <aside className="flex w-[262px] shrink-0 flex-col bg-[#fbfcfe]">
      <div className="flex h-[23px] shrink-0 items-end border-b border-[#8a9bb0] bg-[#eee]" role="tablist">
        <button type="button" role="tab" aria-selected="true" className="-mb-px flex h-[23px] w-[105px] items-center gap-[2px] border-r border-t-2 border-r-[#8a97a8] border-t-[#f5a83c] bg-[#fbfcfe] pl-[7px] text-[#0000b4]">
          <PdfIcon large />
          Schematic
        </button>
        <button type="button" role="tab" aria-selected="false" className={`w-[78px] gap-[2px] pl-px ${idle}`}>
          <PadsIcon />
          Layout
        </button>
        <button type="button" role="tab" aria-selected="false" className={`ml-[2px] w-[74px] gap-[2px] pl-[3px] ${idle}`}>
          <ShareIcon />
          Share
        </button>
      </div>
      <div className="flex min-h-0 flex-1 border-l border-[#8a9bb0] pb-1 pt-[7px]">
        <ul className="-ml-px min-h-0 flex-1 overflow-hidden bg-white pt-px">
          <li>
            <button type="button" aria-expanded="true" className="flex h-4 items-center pl-[15px]">
              <Toggle open />
              <span className={`w-[7px] border-t ${GUIDE}`} />
              <Folder />
              <span className="ml-[5px]">ITEL Schematic</span>
            </button>
          </li>
          {MODELS_BEFORE.map((name) => <li key={name}><ModelRow name={name} /></li>)}
          <li>
            <ModelRow name="A571W" open />
            <FileRow name="F3116_PCB_V1.0" selected />
            <FileRow name="F3116_SCH_V1.0" last />
          </li>
          {MODELS_AFTER.map((name) => <li key={name}><ModelRow name={name} /></li>)}
          <li><ModelRow name="" /></li>
        </ul>
        <ScrollBar className="w-[17px]" lead="h-[39px]" thumb="h-[105px]" />
        <div className="flex w-[9px] items-center border-r border-[#8a9bb0] bg-[#f0f2f5]">
          <svg width="6" height="8" viewBox="0 0 6 8" className="mt-[17px]" aria-hidden="true"><path d="M1 0L5 4L1 8Z" fill="#e01818" /></svg>
        </div>
      </div>
    </aside>
  );
}

function DocumentTabs() {
  return (
    <div className="flex h-[23px] shrink-0 items-end" role="tablist">
      <svg width="11" height="21" viewBox="0 0 11 21" aria-hidden="true"><path d="M0 20.500L9 2L11 .5" fill="none" stroke="#8a97a8" /></svg>
      <button type="button" role="tab" aria-selected="false" className="h-[21px] w-[58px] border-y border-[#8a97a8] pr-px text-black">
        Welcome
      </button>
      <svg width="12" height="21" viewBox="0 0 12 21" aria-hidden="true"><path d="M0 .5L6 9M0 20.500L9 2L12 .5" fill="none" stroke="#8a97a8" /></svg>
      <div className="flex h-[21px] items-center gap-[2px] border-t border-[#8a97a8] pl-[2px]">
        <button type="button" role="tab" aria-selected="true" className="text-[#0000d8]">F3116_PCB_V1.0</button>
        <button type="button" aria-label="Close tab" className="flex h-[13px] w-[13px] items-center justify-center bg-[#9a9a9a]">
          <svg width="7" height="7" viewBox="0 0 7 7"><path d="M1 1L6 6M6 1L1 6" stroke="#fff" strokeWidth="1.500" /></svg>
        </button>
      </div>
      <svg width="11" height="21" viewBox="0 0 11 21" aria-hidden="true"><path d="M0 .5L2 2L11 20.500" fill="none" stroke="#8a97a8" /></svg>
      <span className="flex-1 border-b border-[#8a97a8]" />
    </div>
  );
}

function Toolbar() {
  return (
    <div className="flex h-[29px] shrink-0 items-center border-b-2 border-[#999] pl-[2px] font-['Open_Sans',sans-serif] text-[13px] text-black">
      <Tool label="Copy">{copyIcon}</Tool>
      <Tool label="Rotate right">{rotateIcon}</Tool>
      <Tool label="Rotate left"><span className="-scale-x-100">{rotateIcon}</span></Tool>
      <span className="h-5 border-l border-[#aaa]" />
      <label htmlFor="page" className="ml-[9px] w-[38px]">Page:</label>
      <input id="page" defaultValue="1" className="h-5 w-[39px] border-l border-t border-[#999] bg-white pr-1 text-right" />
      <span className="ml-[5px] w-[22px] whitespace-nowrap">/ 2</span>
      <Tool label="Previous page">
        <svg width="11" height="16" viewBox="0 0 11 16"><path d="M11 0V16L0 8Z" fill="#999" /></svg>
      </Tool>
      <Tool label="Next page" width="w-[26px]">
        <svg width="12" height="18" viewBox="0 0 12 18"><path d="M1 1V17L11 9Z" fill="#f0c04a" stroke="#b8862a" /></svg>
      </Tool>
      <Tool label="Fit width">{fitWidthIcon}</Tool>
      <Tool label="Fit page">{fitPageIcon}</Tool>
      <Tool label="Zoom out"><ZoomIcon /></Tool>
      <Tool label="Zoom in"><ZoomIcon plus /></Tool>
      <span className="h-5 border-l border-[#aaa]" />
      <label htmlFor="find" className="ml-[9px] w-[33px]">Find:</label>
      <input id="find" className="h-5 w-[160px] border-l border-t border-[#999] bg-white px-1" />
      <Tool label="Find previous" width="w-[26px]">
        <svg width="15" height="16" viewBox="0 0 15 16"><path d="M0 2H9V5L10 6L15 0V16L10 11V15H0Z" fill="#999" /></svg>
      </Tool>
      <Tool label="Find next" width="w-[24px]">
        <svg width="15" height="16" viewBox="0 0 15 16"><path d="M15 2H6V5L5 6L0 0V16L5 11V15H15Z" fill="#999" /></svg>
      </Tool>
      <Tool label="Match case">
        <svg width="14" height="16" viewBox="0 0 14 16" fontFamily="Liberation Sans">
          <text x="0" y="14.500" fontSize="13" fill="#8a7cf0">A</text>
          <text x="7" y="8" fontSize="11" fontWeight="bold" fill="#b04aa0">a</text>
        </svg>
      </Tool>
    </div>
  );
}

export default function App() {
  return (
    <div className="flex h-screen flex-col overflow-hidden border-r border-[#66c9ea] bg-[#efefef] font-['Open_Sans','Noto_Sans',sans-serif]">
      <TitleBar />
      <Banner />
      <main className="flex min-h-0 flex-1 font-['Liberation_Mono',monospace] text-[10px] leading-4 text-black">
        <Sidebar />
        <section className="flex min-w-0 flex-1 flex-col">
          <DocumentTabs />
          <Toolbar />
          <div className="flex min-h-0 flex-1 pb-[2px]">
            <div className="flex min-w-0 flex-1 items-start justify-center overflow-hidden bg-[#999]">
              <Board />
            </div>
            <ScrollBar className="w-[15px]" lead="" thumb="h-[319px]" />
          </div>
        </section>
      </main>
      <footer className="flex h-[23px] shrink-0 items-end justify-between border-b-[3px] border-[#66c9ea] bg-[#44688c] pr-px font-['Liberation_Mono',monospace] text-[10px] leading-[14px]">
        <span className="text-black">Version:1.0.0.52</span>
        <span className="text-white">Current [F3116_PCB_V1.0]</span>
      </footer>
    </div>
  );
}
